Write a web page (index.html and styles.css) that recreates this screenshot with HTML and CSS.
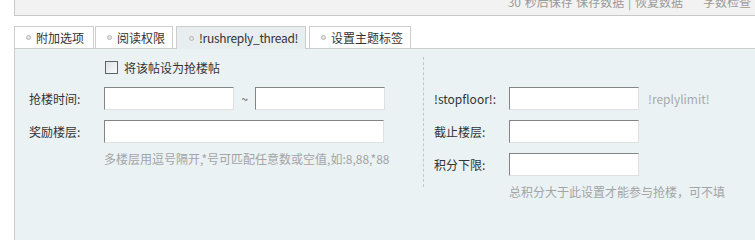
FILE: index.html
```html
<!DOCTYPE html>
<html lang="zh-CN">
<head>
<meta charset="utf-8">
<title>抢楼设置</title>
<link rel="stylesheet" href="styles.css">
</head>
<body>
<div class="wrap">
  <div class="statusbar">
    <div class="status-text">30 秒后保存 <span>保存数据</span> | <span>恢复数据</span><span class="chk">字数检查</span></div>
  </div>
  <ul class="tabs">
    <li class="tab t1"><i class="dot"></i>附加选项</li>
    <li class="tab t2"><i class="dot"></i>阅读权限</li>
    <li class="tab t3 active"><i class="dot"></i>!rushreply_thread!</li>
    <li class="tab t4"><i class="dot"></i>设置主题标签</li>
  </ul>
  <div class="panel">
    <div class="cols">
      <div class="col left">
        <div class="row first">
          <span class="lbl"></span>
          <label class="check"><span class="box"></span>将该帖设为抢楼帖</label>
        </div>
        <div class="row">
          <span class="lbl">抢楼时间:</span>
          <span class="input w130"></span>
          <span class="tilde">~</span>
          <span class="input w130"></span>
        </div>
        <div class="row">
          <span class="lbl">奖励楼层:</span>
          <span class="input w280"></span>
        </div>
        <div class="hint">多楼层用逗号隔开,*号可匹配任意数或空值,如:8,88,*88</div>
      </div>
      <div class="col right">
        <div class="row">
          <span class="lbl">!stopfloor!:</span>
          <span class="input w130"></span>
          <span class="note">!replylimit!</span>
        </div>
        <div class="row">
          <span class="lbl">截止楼层:</span>
          <span class="input w130"></span>
        </div>
        <div class="row">
          <span class="lbl">积分下限:</span>
          <span class="input w130"></span>
        </div>
        <div class="hint">总积分大于此设置才能参与抢楼，可不填</div>
      </div>
    </div>
  </div>
</div>
</body>
</html>
```

FILE: styles.css
```css
html {
  overflow: hidden;
}
html, body {
  margin: 0;
  padding: 0;
  background: #fff;
}
body {
  font-family: "Noto Sans CJK SC", "Noto Sans", "DejaVu Sans", sans-serif;
  font-size: 12px;
  color: #333;
  width: 755px;
}
.wrap {
  margin-left: 14px;
  width: 741px;
}
.statusbar {
  height: 15px;
  border-left: 1px solid #c8c8c8;
  border-bottom: 1px solid #c8c8c8;
  background: #f2f2f2;
  overflow: hidden;
}
.status-text {
  margin-top: -5px;
  padding-right: 4px;
  text-align: right;
  line-height: 14px;
  color: #999;
  white-space: nowrap;
  word-spacing: 1px;
}
.status-text .chk {
  margin-left: 20px;
}
.tabs {
  list-style: none;
  margin: 10px 0 0 0;
  padding: 0;
  display: flex;
  height: 22px;
}
.tab {
  box-sizing: border-box;
  height: 22px;
  line-height: 20px;
  padding: 0 0 0 11px;
  border: 1px solid #cdcdcd;
  border-bottom: none;
  background: #fff;
  color: #333;
  display: flex;
  align-items: center;
  white-space: nowrap;
  overflow: hidden;
}
.t1 { width: 80px; }
.t2 { width: 78px; margin-left: 1px; }
.t3 { width: 130px; margin-left: 3px; }
.t4 { width: 102px; margin-left: 3px; }
.tab.active {
  background: #e8eef0;
  height: 23px;
  position: relative;
  z-index: 1;
  padding-left: 12px;
  letter-spacing: -0.3px;
}
.dot {
  display: inline-block;
  box-sizing: border-box;
  width: 5px;
  height: 5px;
  border: 1px solid #b5b5b5;
  border-radius: 50%;
  background: #e6e6e6;
  margin-right: 5px;
  flex: none;
}
.panel {
  border-top: 1px solid #cdcdcd;
  border-left: 1px solid #cdcdcd;
  background: #eaf2f4;
  height: 200px;
  box-sizing: border-box;
  padding-top: 8px;
}
.cols {
  display: flex;
}
.col {
  display: flex;
  flex-direction: column;
  gap: 10px;
}
.col.left {
  width: 408px;
  padding-left: 14px;
  box-sizing: border-box;
}
.col.right {
  border-left: 1px dashed #c4c8ca;
  padding-left: 10px;
  padding-top: 30px;
  height: 100px;
}
.row {
  display: flex;
  align-items: center;
  height: 23px;
}
.row.first {
  height: 20px;
}
.lbl {
  width: 75px;
  flex: none;
  line-height: 16px;
}
.input {
  box-sizing: border-box;
  height: 23px;
  background: #fff;
  border: 1px solid;
  border-color: #848484 #e0e0e0 #e0e0e0 #848484;
  flex: none;
}
.w130 { width: 130px; }
.w280 { width: 280px; }
.tilde {
  width: 21px;
  text-align: center;
  color: #555;
}
.note {
  margin-left: 9px;
  color: #aaa;
}
.check {
  display: flex;
  align-items: center;
  margin-left: 1px;
}
.box {
  box-sizing: border-box;
  width: 13px;
  height: 13px;
  border: 1px solid #5f6366;
  background: linear-gradient(135deg, #dfe3e6 0%, #fafbfc 100%);
  margin-right: 6px;
}
.hint {
  margin-top: -2px;
  padding-left: 75px;
  line-height: 16px;
  color: #a4a4a4;
  white-space: nowrap;
}
```
